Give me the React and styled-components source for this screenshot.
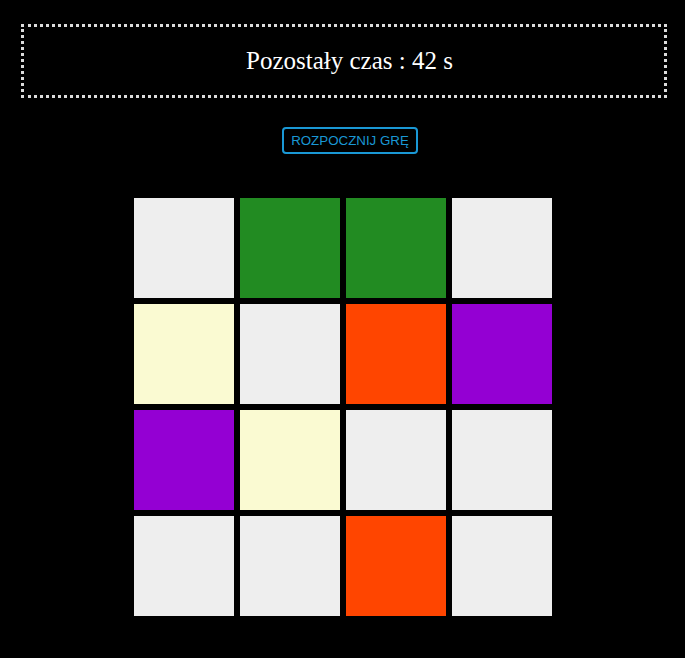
import React from 'react'
import styled, {createGlobalStyle} from 'styled-components'

const GlobalStyle = createGlobalStyle`
  body {
    margin: 0;
    background: #000;
    font-family: "Liberation Serif", serif;
  }
`

const Page = styled.div`
  display: flex;
  flex-direction: column;
  align-items: center;
  padding-top: 24px;
  min-height: 658px;
  box-sizing: border-box;
`

const TimerBox = styled.div`
  align-self: stretch;
  margin: 0 18px 0 21px;
  height: 74px;
  box-sizing: border-box;
  border: 3px dotted #dcdcdc;
  display: flex;
  align-items: center;
  justify-content: center;
  padding-left: 11px;
  color: #fff;
  font-size: 25px;
`

const ButtonRow = styled.div`
  margin-top: 29px;
  padding-left: 15px;
`

const StartButton = styled.button`
  background: transparent;
  border: 2px solid #1a98d5;
  border-radius: 4px;
  color: #1a98d5;
  font-family: "Liberation Sans", Arial, sans-serif;
  font-size: 13.333px;
  padding: 0 7px;
  height: 27px;
  cursor: pointer;
`

const Board = styled.div`
  margin-top: 44px;
  display: grid;
  grid-template-columns: repeat(4, 100px);
  grid-auto-rows: 100px;
  gap: 6px;
`

const Tile = styled.div`
  background: ${p => p.color};
`

const colors = {
  g: '#eeeeee',
  G: '#228b22',
  o: '#ff4500',
  p: '#9400d3',
  y: '#fafad2',
}

const layout = [
  'g', 'G', 'G', 'g',
  'y', 'g', 'o', 'p',
  'p', 'y', 'g', 'g',
  'g', 'g', 'o', 'g',
]

const App = () => {
  return (
    <>
      <GlobalStyle />
      <Page>
        <TimerBox>Pozostały czas : 42 s</TimerBox>
        <ButtonRow>
          <StartButton>ROZPOCZNIJ GRĘ</StartButton>
        </ButtonRow>
        <Board>
          {layout.map((c, i) => (
            <Tile key={i} color={colors[c]} />
          ))}
        </Board>
      </Page>
    </>
  )
}

export default App
